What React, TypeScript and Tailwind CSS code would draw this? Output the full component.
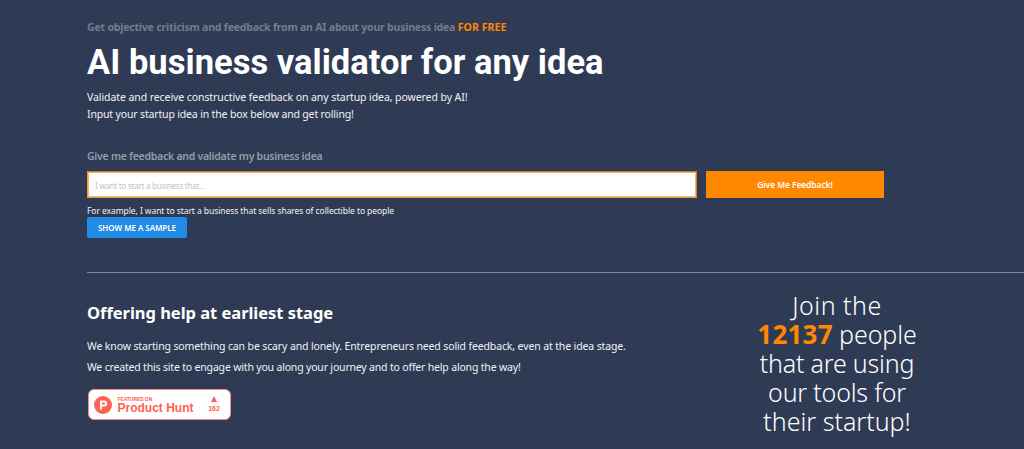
import React from 'react';

function ProductHuntBadge() {
  return (
    <a
      href="#"
      className="mt-[11px] ml-px flex h-[31px] w-[143px] items-center rounded-[6px] border border-[#f08d85] bg-white pl-[5px] font-['Liberation_Sans',sans-serif] text-[#ff6154]"
    >
      <svg width="18" height="18" viewBox="0 0 18 18" className="shrink-0">
        <circle cx="9" cy="9" r="9" fill="#ff6154" />
        <path d="M6 4.5h4.2a3 3 0 0 1 0 6H8v3H6zM8 6.5v2h2.1a1 1 0 0 0 0-2z" fill="#fff" />
      </svg>
      <span className="ml-[5.5px] w-[77px]">
        <span className="block text-[5px] leading-[6px] font-bold tracking-[-0.1px]">FEATURED ON</span>
        <span className="block text-[12px] leading-[12px] font-bold whitespace-nowrap">Product Hunt</span>
      </span>
      <span className="ml-[6.5px] flex w-[26px] flex-col items-center">
        <svg width="6" height="6" viewBox="0 0 6 6">
          <path d="M3 0l3 6H0z" fill="#ff6154" />
        </svg>
        <span className="mt-[3px] text-[7px] leading-[8px] font-bold">162</span>
      </span>
    </a>
  );
}

function IdeaForm() {
  return (
    <form className="mt-[25px]">
      <label htmlFor="idea" className="block text-[10.5px] leading-4 font-semibold tracking-[-0.26px] text-[#969cab]">
        Give me feedback and validate my business idea
      </label>
      <div className="mt-[7px] flex gap-[9px]">
        <input
          id="idea"
          type="text"
          placeholder="I want to start a business that..."
          className="h-[27px] w-[610px] border border-t-[#b47a40] border-r-[#c98238] border-b-[#d9a56a] border-l-[#ee9a42] bg-white px-[7px] pt-px text-[8px] tracking-[-0.24px] text-gray-700 shadow-[inset_0_0_0_1px_#fbb562] outline-none placeholder:text-[#bdc1c9]"
        />
        <button
          type="button"
          className="h-[27px] w-[178px] bg-[#ff8800] pt-[2px] text-[8.5px] font-semibold tracking-[-0.1px] text-white"
        >
          Give Me Feedback!
        </button>
      </div>
      <p className="mt-[6px] text-[8.5px] leading-[13px] tracking-[-0.07px] text-[#f1f2f4]">
        For example, I want to start a business that sells shares of collectible to people
      </p>
      <button
        type="button"
        className="block h-[21px] w-[100px] rounded-[2px] bg-[#228be6] text-[8px] font-semibold tracking-[-0.05px]"
      >
        SHOW ME A SAMPLE
      </button>
    </form>
  );
}

export default function App() {
  return (
    <div className="h-[449px] overflow-hidden bg-[#2f3b55] pl-[87px] font-['Noto_Sans',sans-serif] text-white">
      <header className="pt-[19px]">
        <p className="text-[10.5px] leading-4 font-bold tracking-[-0.19px] text-[#747c8e]">
          Get objective criticism and feedback from an AI about your business idea{' '}
          <span className="font-bold tracking-[0.08px] text-[#ff8800]">FOR FREE</span>
        </p>
        <h1 className="mt-[6px] font-['Roboto',sans-serif] text-[34.5px] leading-[42px] font-bold tracking-[0.03px]">
          AI business validator for any idea
        </h1>
        <p className="mt-[6px] text-[10.5px] leading-[17px] tracking-[-0.08px] text-[#f1f2f4]">
          Validate and receive constructive feedback on any startup idea, powered by AI!
          <br />
          <span className="tracking-[-0.16px]">Input your startup idea in the box below and get rolling!</span>
        </p>
      </header>

      <IdeaForm />

      <section className="mt-[34px] flex border-t border-[#818794]">
        <div className="w-[610px] pt-7">
          <h2 className="text-[16.5px] leading-6 font-bold tracking-[-0.03px]">Offering help at earliest stage</h2>
          <p className="mt-[11px] text-[10.5px] leading-[21px] tracking-[-0.13px] text-[#f1f2f4]">
            We know starting something can be scary and lonely. Entrepreneurs need solid feedback, even at the idea
            stage.
          </p>
          <p className="text-[10.5px] leading-[21px] tracking-[-0.18px] text-[#f1f2f4]">
            We created this site to engage with you along your journey and to offer help along the way!
          </p>
          <ProductHuntBadge />
        </div>
        <p className="ml-[50px] w-[180px] pt-[18px] text-center text-[25px] leading-[29px] font-light whitespace-nowrap">
          <span className="block tracking-[0.5px]">Join the</span>
          <span className="block tracking-[-0.1px]">
            <strong className="text-[26px] leading-none font-bold tracking-[0.2px] text-[#ff8800]">12137</strong> people
          </span>
          <span className="block tracking-[-0.2px]">that are using</span>
          <span className="block tracking-[-0.2px]">our tools for</span>
          <span className="block">their startup!</span>
        </p>
      </section>
    </div>
  );
}
